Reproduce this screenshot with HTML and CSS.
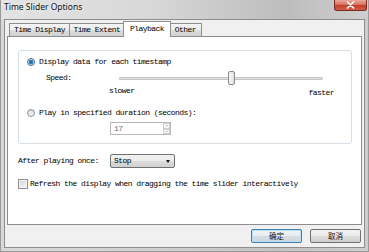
FILE: index.html
```html
<!DOCTYPE html>
<html>
<head>
<meta charset="utf-8">
<link rel="stylesheet" href="styles.css">
</head>
<body>
<div class="window">
  <div class="titlebar">
    <span class="title">Time Slider Options</span>
    <div class="close">
      <svg width="9" height="8" viewBox="0 0 9 8"><path d="M1.5 1 L7.5 7 M7.5 1 L1.5 7" stroke="#fff" stroke-width="1.7" stroke-linecap="round"/></svg>
    </div>
  </div>
  <div class="client">
    <div class="tabs">
      <div class="tab t1">Time Display</div>
      <div class="tab t2">Time Extent</div>
      <div class="tab active">Playback</div>
      <div class="tab t4">Other</div>
    </div>
    <div class="panel">
      <div class="group">
        <div class="opt-row">
          <span class="radio on"></span><span>Display data for each timestamp</span>
        </div>
        <div class="speed-row">
          <span class="speed-label">Speed:</span>
          <div class="slider"><div class="track"></div><div class="thumb"></div></div>
        </div>
        <div class="ticks"><span>slower</span><span class="faster">faster</span></div>
        <div class="opt-row second">
          <span class="radio"></span><span>Play in specified duration (seconds):</span>
        </div>
        <div class="spin">
          <span class="spin-val">17</span>
          <div class="spin-btns"><span class="sb up"></span><span class="sb down"></span></div>
        </div>
      </div>
      <div class="after-row">
        <span class="after-label">After playing once:</span>
        <div class="combo"><span>Stop</span><span class="arrow"></span></div>
      </div>
      <div class="check-row">
        <span class="check"></span><span>Refresh the display when dragging the time slider interactively</span>
      </div>
    </div>
    <div class="buttons">
      <div class="btn default">确定</div>
      <div class="btn">取消</div>
    </div>
  </div>
</div>
</body>
</html>
```

FILE: styles.css
```css
* { box-sizing: border-box; }
html, body { margin: 0; padding: 0; background: #fff; }

.window {
  width: 369px;
  height: 252px;
  padding: 0 3px 3px 3px;
  background: linear-gradient(to right, #d9d9d9 0%, #cfcfcf 45%, #c2c2c2 75%, #cdcdcd 100%);
  border: 1px solid #9a9a9a;
  border-top: none;
  display: flex;
  flex-direction: column;
  font-family: "Liberation Mono", "DejaVu Sans Mono", monospace;
  font-size: 8px;
  letter-spacing: -0.55px;
  color: #000;
}

.titlebar {
  height: 19px;
  margin: 0 -3px;
  display: flex;
  justify-content: space-between;
  align-items: flex-start;
  background: linear-gradient(to right, #e3e3e3 0%, #d8d8d8 40%, #bdbdbd 78%, #cfcfcf 100%);
}
.title {
  font-family: "Noto Sans", "Open Sans", sans-serif;
  font-size: 8.5px;
  letter-spacing: 0;
  line-height: 13px;
  padding-left: 3px;
  color: #111;
  text-shadow: 0 0 4px rgba(255,255,255,0.9);
}
.close {
  width: 33px;
  height: 11px;
  margin-right: 1px;
  border: 1px solid #7a2a20;
  border-top: none;
  border-radius: 0 0 3px 3px;
  background: linear-gradient(#e9a99b 0%, #d7735f 45%, #c2402c 55%, #d0604a 100%);
  display: flex;
  align-items: center;
  justify-content: center;
}

.client {
  flex: 1;
  background: #f0f0f0;
  border: 1px solid #8d8d8d;
  display: flex;
  flex-direction: column;
}

.tabs {
  height: 16px;
  padding-left: 4px;
  display: flex;
  align-items: flex-end;
}
.tab {
  height: 13px;
  border: 1px solid #8c8e94;
  border-bottom: none;
  line-height: 12px;
  text-align: center;
  background: linear-gradient(#f4f4f4, #ececec 50%, #dedede 50%, #d2d2d2);
  white-space: nowrap;
}
.t1 { width: 61px; }
.t2 { width: 56px; margin-left: -1px; }
.tab.active {
  position: relative;
  z-index: 2;
  width: 48px;
  height: 16px;
  margin: 0 -2px -1px -2px;
  background: #fff;
  line-height: 14px;
}
.t4 { width: 33px; }

.panel {
  position: relative;
  z-index: 1;
  height: 189px;
  margin: 0 2px 0 2px;
  background: #fff;
  border: 1px solid #898c95;
  padding: 13px 9px 0 10px;
  display: flex;
  flex-direction: column;
}

.group {
  border: 1px solid #d5dfe5;
  border-radius: 3px;
  padding: 6px 0 8px 0;
  display: flex;
  flex-direction: column;
}
.opt-row {
  height: 10px;
  line-height: 10px;
  padding-left: 8px;
  display: flex;
  align-items: center;
  gap: 4px;
  white-space: nowrap;
}
.opt-row.second { margin-top: 10px; }

.radio {
  width: 8px;
  height: 8px;
  border-radius: 50%;
  border: 1px solid #8e8f8f;
  background: linear-gradient(#d8d8d8, #f8f8f8);
  flex: none;
}
.radio.on {
  border-color: #3c6f98;
  background: radial-gradient(circle, #1f5a8e 0, #3f8fd0 2.2px, #cfe3f3 2.6px, #eef5fb 4px);
}

.speed-row {
  height: 14px;
  margin-top: 4px;
  padding-left: 27px;
  display: flex;
  align-items: center;
}
.speed-label { width: 73px; line-height: 14px; }
.slider {
  position: relative;
  width: 204px;
  height: 14px;
  display: flex;
  align-items: center;
}
.track {
  width: 100%;
  height: 3px;
  background: #e3e3e3;
  border: 1px solid #c4c4c4;
  border-radius: 1px;
}
.thumb {
  position: absolute;
  left: 109px;
  top: 0;
  width: 7px;
  height: 14px;
  border: 1px solid #8a8a8a;
  border-radius: 2px;
  background: linear-gradient(to right, #f6f6f6, #e2e2e2);
}

.ticks {
  height: 12px;
  margin-top: 1px;
  padding: 0 17px 0 90px;
  display: flex;
  line-height: 10px;
}
.faster { margin-left: auto; padding-top: 2px; }

.spin {
  width: 61px;
  height: 13px;
  margin: 4px 0 0 91px;
  border: 1px solid #b5b9bd;
  display: flex;
  align-items: stretch;
  background: #fff;
}
.spin-val {
  flex: 1;
  padding-left: 3px;
  line-height: 11px;
  color: #6d6d6d;
}
.spin-btns {
  width: 7px;
  display: flex;
  flex-direction: column;
}
.sb {
  flex: 1;
  border: 1px solid #d0d0d0;
  background: #f4f4f4;
  display: flex;
  align-items: center;
  justify-content: center;
}
.sb.up::after {
  content: "";
  border-left: 1.5px solid transparent;
  border-right: 1.5px solid transparent;
  border-bottom: 1.5px solid #a0a0a0;
}
.sb.down::after {
  content: "";
  border-left: 1.5px solid transparent;
  border-right: 1.5px solid transparent;
  border-top: 1.5px solid #a0a0a0;
}

.after-row {
  height: 14px;
  margin-top: 10px;
  display: flex;
  align-items: center;
}
.after-label { width: 92px; line-height: 14px; }
.combo {
  width: 65px;
  height: 14px;
  border: 1px solid #707070;
  border-radius: 2px;
  background: linear-gradient(#f2f2f2, #ebebeb 50%, #dddddd 50%, #cfcfcf);
  display: flex;
  align-items: center;
  padding: 0 4px 0 3px;
  line-height: 12px;
}
.combo .arrow {
  margin-left: auto;
  border-left: 2.5px solid transparent;
  border-right: 2.5px solid transparent;
  border-top: 3px solid #111;
}

.check-row {
  height: 10px;
  margin-top: 11px;
  display: flex;
  align-items: center;
  gap: 2px;
  line-height: 10px;
  white-space: nowrap;
}
.check {
  width: 10px;
  height: 10px;
  border: 1px solid #8e8f8f;
  background: linear-gradient(135deg, #d4d4d4, #f6f6f6);
  box-shadow: inset 0 0 0 1px #f4f4f4;
  flex: none;
}

.buttons {
  margin-top: 4px;
  padding-right: 3px;
  display: flex;
  justify-content: flex-end;
  gap: 8px;
}
.btn {
  width: 51px;
  height: 14px;
  border: 1px solid #707070;
  border-radius: 2px;
  background: linear-gradient(#f2f2f2, #ebebeb 50%, #dddddd 50%, #cfcfcf);
  font-family: "Noto Sans CJK SC", "Noto Sans", sans-serif;
  font-size: 7.5px;
  letter-spacing: 0;
  line-height: 12px;
  text-align: center;
  color: #111;
}
.btn.default {
  border-color: #3c7fb1;
  box-shadow: inset 0 0 0 1px #b9def5;
  background: linear-gradient(#f0f4f7, #e7ecf0 50%, #d6dde3 50%, #cdd5dc);
}
```
